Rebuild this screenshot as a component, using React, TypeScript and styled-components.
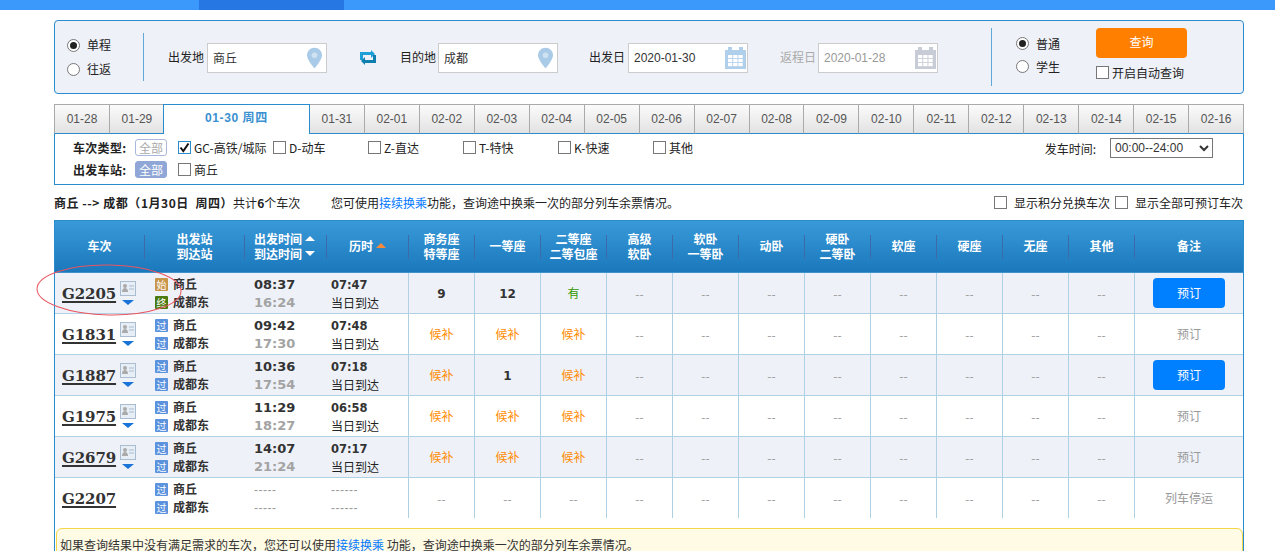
import React from "react";
import styled, { createGlobalStyle } from "styled-components";

const Global = createGlobalStyle`
  html, body { margin: 0; padding: 0; height: 100%; overflow: hidden; background: #fff; }
  body { font-family: "Noto Sans CJK SC", "Liberation Sans", sans-serif; font-size: 12px; color: #222; }
  * { box-sizing: border-box; }
`;
const LATIN = `"Liberation Sans", "Noto Sans CJK SC", sans-serif`;
const SERIF = `"DejaVu Serif", "Noto Sans CJK SC", serif`;
const SANSB = `"DejaVu Sans", "Noto Sans CJK SC", sans-serif`;
const BLUE = "#298cce";

const TopBar = styled.div`height: 10px; background: #3b99fc; padding-left: 199px;`;
const TopActive = styled.div`width: 145px; height: 10px; background: #2676e3;`;
const Page = styled.div`width: 1190px; margin: 10px 0 0 54px;`;

const QueryBox = styled.div`
  height: 74px; display: flex; align-items: center;
  border: 1px solid ${BLUE}; border-radius: 4px; background: #eef1f8;
`;
const TripCol = styled.div<{ $w: number; $pad: number; $gap: number; $lift?: number }>`
  width: ${p => p.$w}px; padding-left: ${p => p.$pad}px; display: flex; flex-direction: column; gap: ${p => p.$gap}px;
  padding-bottom: ${p => p.$lift ?? 0}px;
`;
const OptRow = styled.label`display: flex; align-items: center; gap: 7px; height: 14px; line-height: 14px;`;
const Radio = styled.span<{ $on?: boolean }>`
  width: 13px; height: 13px; border-radius: 50%; border: 1px solid #777; background: #fff;
  display: flex; align-items: center; justify-content: center; flex: none;
  &::after { content: ""; width: 7px; height: 7px; border-radius: 50%; background: ${p => (p.$on ? "#222" : "transparent")}; }
`;
const VLine = styled.div<{ $h: number }>`width: 1px; height: ${p => p.$h}px; background: #5fa8d8; flex: none;`;
const Field = styled.div<{ $left: number; $gap?: number; $muted?: boolean }>`
  margin-left: ${p => p.$left}px; display: flex; align-items: center; gap: ${p => p.$gap ?? 3}px; color: ${p => (p.$muted ? "#aaa" : "#222")};
`;
const FieldLabel = styled.span`width: 36px; white-space: nowrap; margin-top: -1px;`;
const InputBox = styled.div<{ $pr: number }>`
  width: 120px; height: 30px; margin-top: 1px; display: flex; align-items: center; justify-content: space-between;
  background: #fff; border: 1px solid #ccc; padding: 0 ${p => p.$pr}px 0 5px;
`;
const PlainInput = styled.input<{ $muted?: boolean }>`
  border: 0; outline: 0; background: transparent; padding: 0; width: 80px; height: 20px;
  font: 12px ${LATIN}; color: ${p => (p.$muted ? "#999" : "#333")};
`;
const SwapWrap = styled.span`margin-left: 33px; display: flex; width: 16px;`;
const SearchCol = styled.div`margin-left: 24px; width: 100px; display: flex; flex-direction: column; gap: 6px; align-self: flex-start; padding-top: 7px;`;
const SearchBtn = styled.button`
  width: 91px; height: 30px; border: 0; border-radius: 4px; background: #ff8000; color: #fff; padding: 0 0 3px;
  font: 12px "Noto Sans CJK SC", sans-serif;
`;
const CheckRow = styled.label<{ $w?: number; $gap?: number }>`
  display: flex; align-items: center; gap: ${p => p.$gap ?? 3}px; white-space: nowrap;
  ${p => (p.$w ? `width: ${p.$w}px;` : "")}
`;
const Box = styled.span<{ $on?: boolean }>`
  width: 13px; height: 13px; flex: none; background: #fff; border: 1px solid ${p => (p.$on ? "#2a8bd0" : "#777")};
  display: flex; align-items: center; justify-content: center;
`;

const Tabs = styled.div`display: flex; height: 30px; margin: 10px 0 -1px; position: relative;`;
const Tab = styled.div<{ $on?: boolean }>`
  flex: ${p => (p.$on ? "0 0 147px" : "1 1 0")}; display: flex; align-items: center; justify-content: center;
  font: ${p => (p.$on ? "bold 12px" : "12px")} ${LATIN};
  letter-spacing: ${p => (p.$on ? "0.6px" : "0")};
  color: ${p => (p.$on ? "#3a90d0" : "#555")};
  padding-bottom: ${p => (p.$on ? "6px" : "0")};
  background: ${p => (p.$on ? "#fff" : "linear-gradient(#fbfbfb, #e2e2e2)")};
  border: 1px solid ${p => (p.$on ? BLUE : "#aaa")};
  border-bottom: ${p => (p.$on ? "0" : `1px solid ${BLUE}`)};
  margin-left: ${p => (p.$on ? "-2px" : "-1px")};
  &:first-child { margin-left: 0; }
  ${p => (p.$on ? "position: relative; z-index: 1;" : "")}
`;
const FilterBox = styled.div`height: 52px; border: 1px solid ${BLUE}; padding: 2px 30px 0 18px; background: #fff;`;
const FilterRow = styled.div`height: 22px; display: flex; align-items: center;`;
const FilterLabel = styled.b`width: 62px; white-space: nowrap; letter-spacing: 0.3px;`;
const Chip = styled.span<{ $on?: boolean }>`
  width: 32px; height: 17px; margin-right: 11px; flex: none; border-radius: 3px; text-align: center; line-height: 15px;
  border: 1px solid ${p => (p.$on ? "#8fa6d6" : "#a9b8dc")};
  background: ${p => (p.$on ? "#8fa6d6" : "#fff")}; color: ${p => (p.$on ? "#fff" : "#aaa")};
`;
const TimeGroup = styled.div`margin-left: auto; display: flex; align-items: center; gap: 14px; white-space: nowrap; margin-top: 2px;`;
const TimeSelect = styled.select`
  width: 103px; height: 20px; border: 1px solid #777; background: #fff; padding: 0; font: 12px ${LATIN}; color: #333;
`;

const InfoLine = styled.div`height: 35px; display: flex; align-items: center; white-space: nowrap;`;
const InfoLeft = styled.div`width: 277px;`;
const InfoStrong = styled.b`letter-spacing: 0.55px;`;
const Link = styled.span`color: #0077ff;`;
const InfoRight = styled.div`margin-left: auto; padding-right: 1px; display: flex; gap: 5px;`;

const Table = styled.div`
  position: relative; height: 400px; border: 1px solid ${BLUE}; border-bottom: 0;
`;
const COLS = "89px 100px 82px 82px repeat(11, 66px) 1fr";
const Head = styled.div`
  height: 52px; display: grid; grid-template-columns: ${COLS}; align-items: center;
  background: linear-gradient(#3a9ad8, #1a78bc); color: #fff; font-weight: bold; border-bottom: 1px solid #3f92cc;
`;
const HeadCell = styled.div<{ $first?: boolean; $left?: number }>`
  height: 24px; display: flex; flex-direction: column; align-items: ${p => (p.$left !== undefined ? "flex-start" : "center")}; justify-content: center;
  padding: 0 0 2px ${p => p.$left ?? 0}px; line-height: 15px; white-space: nowrap;
  border-left: ${p => (p.$first ? "0" : "1px solid #3d6aa8")};
`;
const HeadLine = styled.span`display: flex; align-items: center; gap: 3px;`;
const Tri = styled.i<{ $up?: boolean; $c?: string }>`
  width: 0; height: 0; border-left: 5px solid transparent; border-right: 5px solid transparent;
  ${p => (p.$up ? "border-bottom" : "border-top")}: 5px solid ${p => p.$c ?? "#fff"};
`;
const Row = styled.div<{ $alt?: boolean; $last?: boolean }>`
  height: ${p => (p.$last ? 40 : 41)}px; display: grid; grid-template-columns: ${COLS};
  background: ${p => (p.$alt ? "#eef1f8" : "#fff")};
  border-bottom: ${p => (p.$last ? "0" : "1px solid #b0d0e4")};
`;
const TrainCell = styled.div`display: flex; align-items: center; padding-left: 7px;`;
const TrainNo = styled.span`
  font: bold 15px ${SERIF}; color: #333; width: 58px; padding-top: 2px; text-decoration: underline; text-decoration-thickness: 2px; text-underline-offset: 2px;
  letter-spacing: -0.1px;
`;
const TrainIcons = styled.div`display: flex; flex-direction: column; align-items: center; gap: 4px; width: 16px; margin-top: -1px;`;
const Arrow = styled.i`width: 0; height: 0; border-left: 6px solid transparent; border-right: 6px solid transparent; border-top: 5px solid #1a74d8;`;
const StackCell = styled.div<{ $pad: number; $top?: number }>`
  display: flex; flex-direction: column; justify-content: center; padding: ${p => p.$top ?? 0}px 0 0 ${p => p.$pad}px; line-height: 18px; white-space: nowrap;
`;
const StationLine = styled.div`display: flex; align-items: center; gap: 5px; font-weight: bold; color: #333;`;
const Badge = styled.span<{ $c: string }>`
  width: 13px; height: 13px; background: ${p => p.$c}; color: #fff; font: 10px/13px "Noto Sans CJK SC", sans-serif; text-align: center; border-radius: 1px;
`;
const Time = styled.span<{ $gray?: boolean }>`font: bold 13px/18px ${SANSB}; color: ${p => (p.$gray ? "#a3a3a3" : "#333")};`;
const Dur = styled.span`font: bold 11.5px/18px ${SANSB}; color: #333;`;
const Dash = styled.span`font: 12px/18px ${LATIN}; color: #999; letter-spacing: 0.5px;`;
const Seat = styled.div<{ $kind: string }>`
  display: flex; align-items: center; justify-content: center; border-left: 1px solid #b0d0e4;
  color: ${p => ({ wait: "#ff8c00", yes: "#339900", none: "#999", num: "#333" } as Record<string, string>)[p.$kind]};
  font-weight: ${p => (p.$kind === "num" ? "bold" : "normal")};
  ${p => (p.$kind === "num" ? `font-family: ${SANSB}; font-size: 12px; padding-top: 2px;` : "")}
  ${p => (p.$kind === "wait" || p.$kind === "yes" ? "padding-bottom: 1px;" : "")}
`;
const NoteCell = styled.div`display: flex; align-items: center; justify-content: center; border-left: 1px solid #b0d0e4; color: #999; padding-bottom: 1px;`;
const BookBtn = styled.button`
  width: 72px; height: 30px; margin-top: 1px; border: 0; border-radius: 4px; background: #0080ff; color: #fff; padding: 0 0 2px; font: 12px "Noto Sans CJK SC", sans-serif;
`;
const Notice = styled.div`
  margin: 10px 0 0 1px; height: 40px; padding: 7px 3px; background: #fffbe5; border: 1px solid #f5d54a; border-radius: 6px; white-space: nowrap; color: #333;
`;
const Circle = styled.svg`position: absolute; left: -21px; top: 41px; z-index: 2; pointer-events: none;`;

const Pin = () => (
  <svg width="15" height="22" viewBox="0 0 16 22">
    <path d="M8 0C3.6 0 0 3.5 0 8c0 5.2 8 14 8 14s8-8.800 8-14c0-4.500-3.600-8-8-8z" fill="#a9cbe8" />
    <circle cx="8" cy="8" r="3" fill="#cfe2f2" />
  </svg>
);
const Calendar = ({ c }: { c: string }) => (
  <svg width="21" height="22" viewBox="0 0 21 22">
    <rect x="0" y="3" width="21" height="19" fill={c} />
    <rect x="3" y="0" width="4" height="4" fill={c} />
    <rect x="14" y="0" width="4" height="4" fill={c} />
    {[0, 1, 2].map(r =>
      [0, 1, 2].map(k => <rect key={`${r}${k}`} x={3 + k * 5.2} y={8 + r * 4} width="4.300" height="3.200" fill="#fff" />)
    )}
  </svg>
);
const Swap = () => (
  <svg width="16" height="15" viewBox="0 0 16 15">
    <path d="M0 10V2h11V0l4 4-4 4V5H3v5z" fill="#1e9fd8" />
    <path d="M16 5v8H5v2L1 11l4-4v3h8V5z" fill="#0f7fb0" />
  </svg>
);
const Tick = () => (
  <svg width="11" height="11" viewBox="0 0 11 11">
    <path d="M1.500 5.500l2.800 3.500L9.500 1.500" fill="none" stroke="#111" strokeWidth="2" />
  </svg>
);
const Card = () => (
  <svg width="16" height="15" viewBox="0 0 16 15">
    <rect x="0.500" y="0.500" width="15" height="14" fill="#e8eef6" stroke="#a9bcd0" />
    <circle cx="5" cy="5" r="2" fill="#aaa" />
    <path d="M2 11c0-3 1.500-4 3-4s3 1 3 4z" fill="#aaa" />
    <path d="M9 5h5M9 8h5" stroke="#a9bcd0" />
  </svg>
);

const dates = ["01-28","01-29","01-30 周四","01-31","02-01","02-02","02-03","02-04","02-05","02-06","02-07","02-08","02-09","02-10","02-11","02-12","02-13","02-14","02-15","02-16"];
const heads: { l: string[] }[] = [
  { l: ["商务座", "特等座"] }, { l: ["一等座"] }, { l: ["二等座", "二等包座"] }, { l: ["高级", "软卧"] },
  { l: ["软卧", "一等卧"] }, { l: ["动卧"] }, { l: ["硬卧", "二等卧"] }, { l: ["软座"] }, { l: ["硬座"] }, { l: ["无座"] }, { l: ["其他"] },
];
const W = "候补";
type T = { no: string; a: [string, string]; dep: string; arr: string; dur: string; seats: string[]; note: string; card?: boolean };
const trains: T[] = [
  { no: "G2205", a: ["始", "终"], dep: "08:37", arr: "16:24", dur: "07:47", seats: ["9", "12", "有"], note: "btn", card: true },
  { no: "G1831", a: ["过", "过"], dep: "09:42", arr: "17:30", dur: "07:48", seats: [W, W, W], note: "text", card: true },
  { no: "G1887", a: ["过", "过"], dep: "10:36", arr: "17:54", dur: "07:18", seats: [W, "1", W], note: "btn", card: true },
  { no: "G1975", a: ["过", "过"], dep: "11:29", arr: "18:27", dur: "06:58", seats: [W, W, W], note: "text", card: true },
  { no: "G2679", a: ["过", "过"], dep: "14:07", arr: "21:24", dur: "07:17", seats: [W, W, W], note: "text", card: true },
  { no: "G2207", a: ["过", "过"], dep: "-----", arr: "-----", dur: "------", seats: ["--", "--", "--"], note: "stop" },
];
const badgeColor: Record<string, string> = { 始: "#c8964a", 终: "#4a7a10", 过: "#5b92dd" };
const kindOf = (s: string) => (s === W ? "wait" : s === "有" ? "yes" : s === "--" ? "none" : "num");

export default function App() {
  return (
    <>
      <Global />
      <TopBar><TopActive /></TopBar>
      <Page>
        <QueryBox>
          <TripCol $w={88} $pad={12} $gap={10}>
            <OptRow><Radio $on />单程</OptRow>
            <OptRow><Radio />往返</OptRow>
          </TripCol>
          <VLine $h={48} />
          <Field $left={24}>
            <FieldLabel>出发地</FieldLabel>
            <InputBox $pr={4}><PlainInput defaultValue="商丘" /><Pin /></InputBox>
          </Field>
          <SwapWrap><Swap /></SwapWrap>
          <Field $left={24} $gap={2}>
            <FieldLabel>目的地</FieldLabel>
            <InputBox $pr={4}><PlainInput defaultValue="成都" /><Pin /></InputBox>
          </Field>
          <Field $left={31}>
            <FieldLabel>出发日</FieldLabel>
            <InputBox $pr={1}><PlainInput defaultValue="2020-01-30" /><Calendar c="#b0cfea" /></InputBox>
          </Field>
          <Field $left={32} $gap={2} $muted>
            <FieldLabel>返程日</FieldLabel>
            <InputBox $pr={1}><PlainInput $muted defaultValue="2020-01-28" /><Calendar c="#c8ccd6" /></InputBox>
          </Field>
          <Field $left={53}><VLine $h={58} /></Field>
          <TripCol $w={80} $pad={24} $gap={9} $lift={4}>
            <OptRow><Radio $on />普通</OptRow>
            <OptRow><Radio />学生</OptRow>
          </TripCol>
          <SearchCol>
            <SearchBtn>查询</SearchBtn>
            <CheckRow><Box />开启自动查询</CheckRow>
          </SearchCol>
        </QueryBox>

        <Tabs>
          {dates.map(d => <Tab key={d} $on={d.length > 5}>{d}</Tab>)}
        </Tabs>
        <FilterBox>
          <FilterRow>
            <FilterLabel>车次类型:</FilterLabel>
            <Chip>全部</Chip>
            <CheckRow $w={95}><Box $on><Tick /></Box>GC-高铁/城际</CheckRow>
            <CheckRow $w={95}><Box />D-动车</CheckRow>
            <CheckRow $w={95}><Box />Z-直达</CheckRow>
            <CheckRow $w={95}><Box />T-特快</CheckRow>
            <CheckRow $w={95}><Box />K-快速</CheckRow>
            <CheckRow $w={95}><Box />其他</CheckRow>
            <TimeGroup>
              发车时间:
              <TimeSelect defaultValue="a"><option value="a">00:00--24:00</option></TimeSelect>
            </TimeGroup>
          </FilterRow>
          <FilterRow>
            <FilterLabel>出发车站:</FilterLabel>
            <Chip $on>全部</Chip>
            <CheckRow><Box />商丘</CheckRow>
          </FilterRow>
        </FilterBox>

        <InfoLine>
          <InfoLeft><InfoStrong>商丘 --&gt; 成都（1月30日&nbsp; 周四）</InfoStrong>共计<b>6</b>个车次</InfoLeft>
          <span>您可使用<Link>接续换乘</Link>功能，查询途中换乘一次的部分列车余票情况。</span>
          <InfoRight>
            <CheckRow $gap={7}><Box />显示积分兑换车次</CheckRow>
            <CheckRow $gap={7}><Box />显示全部可预订车次</CheckRow>
          </InfoRight>
        </InfoLine>

        <Table>
          <Head>
            <HeadCell $first>车次</HeadCell>
            <HeadCell><span>出发站</span><span>到达站</span></HeadCell>
            <HeadCell $left={9}>
              <HeadLine>出发时间<Tri $up /></HeadLine>
              <HeadLine>到达时间<Tri /></HeadLine>
            </HeadCell>
            <HeadCell><HeadLine>历时<Tri $up $c="#f58a3c" /></HeadLine></HeadCell>
            {heads.map(h => (
              <HeadCell key={h.l.join()}>{h.l.map(t => <span key={t}>{t}</span>)}</HeadCell>
            ))}
            <HeadCell>备注</HeadCell>
          </Head>
          {trains.map((t, i) => {
            const dead = t.dep.startsWith("-");
            return (
              <Row key={t.no} $alt={i % 2 === 0} $last={i === 5}>
                <TrainCell>
                  <TrainNo>{t.no}</TrainNo>
                  {t.card && <TrainIcons><Card /><Arrow /></TrainIcons>}
                </TrainCell>
                <StackCell $pad={11}>
                  <StationLine><Badge $c={badgeColor[t.a[0]]}>{t.a[0]}</Badge>商丘</StationLine>
                  <StationLine><Badge $c={badgeColor[t.a[1]]}>{t.a[1]}</Badge>成都东</StationLine>
                </StackCell>
                <StackCell $pad={10} $top={2}>
                  {dead ? <><Dash>{t.dep}</Dash><Dash>{t.arr}</Dash></> : <><Time>{t.dep}</Time><Time $gray>{t.arr}</Time></>}
                </StackCell>
                <StackCell $pad={5} $top={1}>
                  {dead ? <><Dash>{t.dur}</Dash><Dash>{t.dur}</Dash></> : <><Dur>{t.dur}</Dur><span>当日到达</span></>}
                </StackCell>
                {t.seats.map((s, k) => <Seat key={k} $kind={kindOf(s)}>{s}</Seat>)}
                {Array.from({ length: 8 }).map((_, k) => <Seat key={k} $kind="none">--</Seat>)}
                <NoteCell>
                  {t.note === "btn" ? <BookBtn>预订</BookBtn> : t.note === "text" ? "预订" : "列车停运"}
                </NoteCell>
              </Row>
            );
          })}
          <Notice>如果查询结果中没有满足需求的车次，您还可以使用<Link>接续换乘</Link> 功能，查询途中换乘一次的部分列车余票情况。</Notice>
          <Circle width="150" height="56" viewBox="0 0 150 56">
            <ellipse cx="75" cy="28" rx="72" ry="25" fill="none" stroke="#e85560" strokeWidth="1" transform="rotate(1 75 28)" />
          </Circle>
        </Table>
      </Page>
    </>
  );
}
